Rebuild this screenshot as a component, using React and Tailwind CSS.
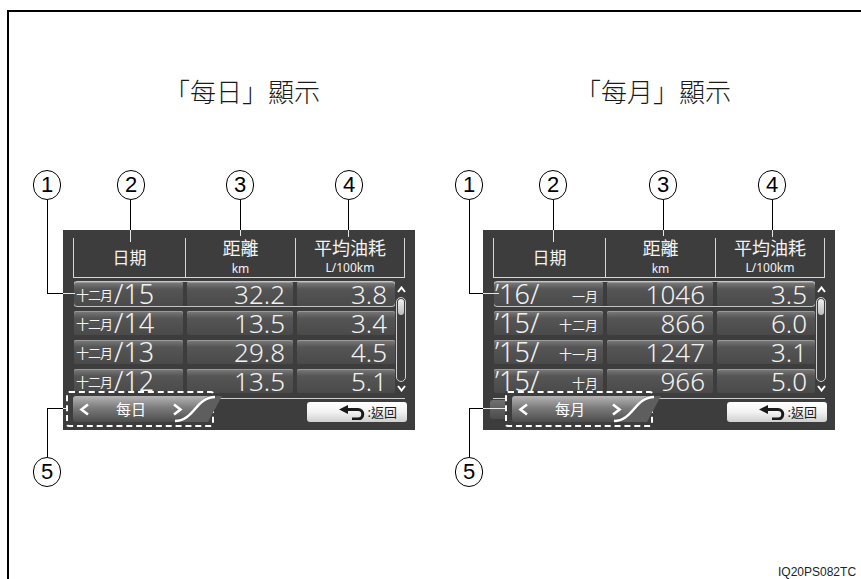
import React from "react";

const leftRows = [
  { small: "十二月", big: "/15", dist: "32.2", fuel: "3.8" },
  { small: "十二月", big: "/14", dist: "13.5", fuel: "3.4" },
  { small: "十二月", big: "/13", dist: "29.8", fuel: "4.5" },
  { small: "十二月", big: "/12", dist: "13.5", fuel: "5.1" },
];

const rightRows = [
  { big: "’16/", small: "一月", dist: "1046", fuel: "3.5" },
  { big: "’15/", small: "十二月", dist: "866", fuel: "6.0" },
  { big: "’15/", small: "十一月", dist: "1247", fuel: "3.1" },
  { big: "’15/", small: "十月", dist: "966", fuel: "5.0" },
];

const cell =
  "h-[24px] rounded-[2px] bg-linear-to-b from-[#7c7c7c] via-[#555555] via-30% to-[#4a4a4a] shadow-[inset_0_1px_0_#9a9a9a]";

function Callout({ n, className }) {
  return (
    <div
      className={`absolute w-[28px] h-[30px] rounded-full border border-black bg-white flex items-center justify-center text-[22px] leading-none text-black font-['Liberation_Sans',sans-serif] ${className}`}
    >
      {n}
    </div>
  );
}

function Chevron({ dir }) {
  return (
    <svg width="11" height="13" viewBox="0 0 11 13">
      <polyline
        points={dir === "left" ? "9,1.5 2.5,6.5 9,11.5" : "2,1.5 8.5,6.5 2,11.5"}
        fill="none"
        stroke="#ffffff"
        strokeWidth="2.6"
      />
    </svg>
  );
}

function ModeTab({ label, id }) {
  return (
    <div className="relative w-[142px] h-[28px]">
      <svg className="absolute left-0 top-0 overflow-visible" width="150" height="28" viewBox="0 0 150 28">
        <defs>
          <linearGradient id={id} x1="0" y1="0" x2="0" y2="1">
            <stop offset="0" stopColor="#b4b4b4" />
            <stop offset="0.45" stopColor="#7c7c7c" />
            <stop offset="1" stopColor="#4c4c4c" />
          </linearGradient>
        </defs>
        <path d="M140 1 C124 1 122 27 106 27 L136 27 L150 1 Z" fill="#5e5e5e" />
        <path
          d="M4 1 L140 1 C124 1 122 27 106 27 L4 27 Q1 27 1 24 L1 4 Q1 1 4 1 Z"
          fill={`url(#${id})`}
        />
        <path d="M103 26 C122 26 124 2 143 2" fill="none" stroke="#ffffff" strokeWidth="2.6" />
      </svg>
      <div className="relative flex items-center h-full pl-[7px] text-white">
        <Chevron dir="left" />
        <span className="w-[82px] text-center text-[15px] leading-none">{label}</span>
        <Chevron dir="right" />
      </div>
    </div>
  );
}

function ReturnButton() {
  return (
    <div className="w-[100px] h-[20px] rounded-[3px] bg-linear-to-b from-white via-[#f2f2f2] to-[#cfcfcf] flex items-center justify-end pr-[10px] gap-[2px]">
      <svg width="27" height="15" viewBox="0 0 27 15">
        <polygon points="0,4.5 9,0 9,9" fill="#1a1a1a" />
        <path d="M8 4.5 H19 A4.75 4.75 0 0 1 19 14 H13" fill="none" stroke="#1a1a1a" strokeWidth="3" />
      </svg>
      <span className="text-[13px] leading-none text-[#1a1a1a]">:返回</span>
    </div>
  );
}

function ScrollBar() {
  return (
    <div className="w-[12px] flex flex-col items-center pt-[8px]">
      <svg width="9" height="7" viewBox="0 0 9 7">
        <polyline points="1,6 4.5,1.5 8,6" fill="none" stroke="#ffffff" strokeWidth="2" />
      </svg>
      <div className="mt-[4px] w-[10px] h-[85px] rounded-full border border-[#d0d0d0] p-[1px]">
        <div className="h-[16px] rounded-full bg-linear-to-b from-[#f0f0f0] to-[#bdbdbd]" />
      </div>
      <svg className="mt-[3px]" width="9" height="7" viewBox="0 0 9 7">
        <polyline points="1,1 4.5,5.5 8,1" fill="none" stroke="#ffffff" strokeWidth="2" />
      </svg>
    </div>
  );
}

function Row({ row, monthly, selected }) {
  return (
    <div
      className={`flex gap-[4px] rounded-[3px] ${selected ? "outline outline-1 outline-[#c4c4c4]" : ""}`}
    >
      <div className={`${cell} w-[109px] flex items-center overflow-hidden ${monthly ? "justify-between pl-[1px] pr-[5px]" : "pl-[2px]"}`}>
        {monthly ? (
          <>
            <span className="text-[27px] leading-[24px] font-light">{row.big}</span>
            <span className="text-[13px] leading-[14px] pt-[4px]">{row.small}</span>
          </>
        ) : (
          <>
            <span className="text-[13px] leading-[14px] tracking-[-1px] pt-[2px]">{row.small}</span>
            <span className="text-[27px] leading-[24px] font-light ml-[2px]">{row.big}</span>
          </>
        )}
      </div>
      <div className={`${cell} w-[106px] flex items-center justify-end pr-[8px] text-[26px] leading-[24px] font-light`}>
        {row.dist}
      </div>
      <div className={`${cell} w-[98px] flex items-center justify-end pr-[8px] text-[26px] leading-[24px] font-light`}>
        {row.fuel}
      </div>
    </div>
  );
}

function Screen({ title, rows, monthly }) {
  return (
    <div className="relative w-[420px] h-full">
      {/* Title */}
      <div
        className={`mt-[64px] ml-[54px] w-[352px] h-[32px] text-center text-[26px] leading-[32px] font-light text-[#1a1a1a] ${monthly ? "pr-[12px]" : "pl-[6px]"}`}
      >
        {title}
      </div>

      {/* Screen panel */}
      <div className="mt-[122px] ml-[54px] w-[352px] h-[200px] bg-[#3d3d3d] flex flex-col text-[#f2f2f2]">
        {/* Header */}
        <div className="mt-[8px] ml-[10px] w-[332px] h-[40px] flex border-l border-r border-b border-[#d6d6d6]">
          <div className="w-[112px] border-r border-[#d6d6d6] flex items-center justify-center text-[17px] leading-none">
            日期
          </div>
          <div className="w-[110px] border-r border-[#d6d6d6] flex flex-col items-center">
            <span className="text-[18px] leading-[20px]">距離</span>
            <span className="mt-[4px] text-[12px] leading-[14px]">km</span>
          </div>
          <div className="flex-1 flex flex-col items-center">
            <span className="text-[18px] leading-[20px]">平均油耗</span>
            <span className="mt-[3px] text-[12px] leading-[14px]">L/100km</span>
          </div>
        </div>

        {/* Rows */}
        <div className="ml-[11px] h-[120px] flex">
          <div className="w-[321px] pt-[4px] flex flex-col gap-[5px] overflow-hidden">
            {rows.map((r, i) => (
              <Row key={i} row={r} monthly={monthly} selected={i === 0} />
            ))}
          </div>
          <ScrollBar />
        </div>
        <div className="ml-[10px] w-[332px] h-px bg-[#cfcfcf]" />

        {/* Bottom bar */}
        <div className="relative -mt-[8px] h-[36px] flex items-center">
          {monthly && (
            <div className="ml-[7px] mt-[1px] w-[17px] h-[19px] rounded-l-[3px] bg-linear-to-b from-[#707070] to-[#4c4c4c]" />
          )}
          <div
            className={`w-[148px] h-[36px] border-2 border-dashed border-white rounded-[3px] pl-[4px] flex items-center bg-[#3d3d3d] ${monthly ? "-ml-[2px]" : "ml-[3px]"}`}
          >
            <ModeTab label={monthly ? "每月" : "每日"} id={monthly ? "tabR" : "tabL"} />
          </div>
          <div className="flex-1" />
          <div className="mr-[8px] mt-[6px]">
            <ReturnButton />
          </div>
        </div>
      </div>

      {/* Callouts */}
      <Callout n="1" className={monthly ? "left-[26px] top-[158px]" : "left-[24px] top-[158px]"} />
      <Callout n="2" className={monthly ? "left-[110px] top-[158px]" : "left-[108px] top-[158px]"} />
      <Callout n="3" className={monthly ? "left-[220px] top-[158px]" : "left-[217px] top-[158px]"} />
      <Callout n="4" className={monthly ? "left-[329px] top-[158px]" : "left-[326px] top-[158px]"} />
      <Callout n="5" className={monthly ? "left-[26px] top-[445px]" : "left-[24px] top-[445px]"} />

      {/* Leader lines */}
      <div className={`absolute top-[188px] w-px h-[93px] bg-black ${monthly ? "left-[40px]" : "left-[38px]"}`} />
      <div className={`absolute top-[281px] h-px bg-black ${monthly ? "left-[40px] w-[14px]" : "left-[38px] w-[16px]"}`} />
      <div className={`absolute top-[281px] left-[54px] h-px bg-[#e6e6e6] ${monthly ? "w-[16px]" : "w-[12px]"}`} />

      <div className={`absolute top-[188px] w-px h-[30px] bg-black ${monthly ? "left-[124px]" : "left-[121px]"}`} />
      <div className={`absolute top-[218px] w-px h-[12px] bg-[#e6e6e6] ${monthly ? "left-[124px]" : "left-[121px]"}`} />
      <div className={`absolute top-[188px] w-px h-[30px] bg-black ${monthly ? "left-[234px]" : "left-[231px]"}`} />
      <div className={`absolute top-[218px] w-px h-[6px] bg-[#e6e6e6] ${monthly ? "left-[234px]" : "left-[231px]"}`} />
      <div className={`absolute top-[188px] w-px h-[30px] bg-black ${monthly ? "left-[343px]" : "left-[339px]"}`} />
      <div className={`absolute top-[218px] w-px h-[7px] bg-[#e6e6e6] ${monthly ? "left-[343px]" : "left-[339px]"}`} />

      <div className={`absolute top-[396px] w-px h-[49px] bg-black ${monthly ? "left-[40px]" : "left-[38px]"}`} />
      <div className={`absolute top-[396px] h-px bg-black ${monthly ? "left-[40px] w-[14px]" : "left-[38px] w-[16px]"}`} />
      <div className={`absolute top-[396px] left-[54px] h-px bg-[#e6e6e6] ${monthly ? "w-[22px]" : "w-[3px]"}`} />
    </div>
  );
}

export default function App() {
  return (
    <div className="relative w-[861px] h-[579px] overflow-hidden bg-white pt-[10px] pl-[7px] font-['Noto_Sans','Noto_Sans_CJK_TC',sans-serif]">
      <div className="h-[569px] border-l-2 border-t-2 border-black flex">
        <Screen title="「每日」顯示" rows={leftRows} monthly={false} />
        <Screen title="「每月」顯示" rows={rightRows} monthly />
      </div>
      <div className="absolute left-[778px] top-[566px] text-[12px] leading-none text-[#222] font-['Liberation_Sans',sans-serif] whitespace-nowrap">
        IQ20PS082TC
      </div>
    </div>
  );
}
